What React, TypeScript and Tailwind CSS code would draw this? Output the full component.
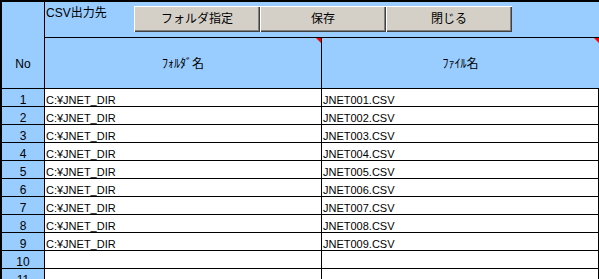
import React from "react";

const FONT = "font-['Liberation_Sans','Noto_Sans_CJK_JP',sans-serif]";

function Btn({ label }: { label: string }) {
  return (
    <div className="w-[126px] h-[26px] bg-[#d4d0c8] shadow-[inset_1px_1px_#ffffff,inset_-1px_-1px_#404040,inset_-2px_-2px_#808080] flex items-center justify-center text-[12px] text-black leading-none">
      {label}
    </div>
  );
}

function Tri() {
  return (
    <div className="absolute top-0 right-0 w-0 h-0 border-t-[5px] border-t-[#ff0000] border-l-[5px] border-l-transparent" />
  );
}

export default function App() {
  const rows = Array.from({ length: 11 }, (_, i) => i + 1);
  return (
    <div className={`w-[599px] h-[279px] overflow-hidden bg-white text-black ${FONT}`}>
      <div className="border-t-2 border-l-2 border-black">
        {/* header block */}
        <div className="flex h-[87px] border-b border-black">
          <div className="w-[43px] bg-[#99ccff] border-r border-black flex flex-col">
            <div className="h-[36px]" />
            <div className="flex-1 flex items-center justify-center text-[12px] pt-[2px]">No</div>
          </div>
          <div className="flex-1 flex flex-col bg-[#99ccff]">
            <div className="h-[36px] border-b border-black flex items-start">
              <div className="w-[89px] pl-[1px] pt-[4px] text-[12px] leading-[14px]">CSV出力先</div>
              <div className="flex mt-[4px]">
                <Btn label="フォルダ指定" />
                <Btn label="保存" />
                <Btn label="閉じる" />
              </div>
            </div>
            <div className="flex-1 flex">
              <div className="relative w-[277px] border-r border-black flex items-center justify-center text-[12px] pt-[2px]">
                ﾌｫﾙﾀﾞ名
                <Tri />
              </div>
              <div className="relative w-[277px] flex items-center justify-center text-[12px] pt-[2px]">
                ﾌｧｲﾙ名
                <Tri />
              </div>
            </div>
          </div>
        </div>
        {/* data rows */}
        {rows.map((n) => (
          <div key={n} className="flex h-[18px] border-b border-black">
            <div className="w-[43px] bg-[#99ccff] border-r border-black text-center text-[12px] leading-[12px] pt-[5px]">
              {n}
            </div>
            <div className="w-[277px] border-r border-black text-[11px] leading-[12px] pt-[5px] pl-[1px] whitespace-nowrap">
              {n <= 9 ? "C:¥JNET_DIR" : ""}
            </div>
            <div className="w-[277px] border-r border-black text-[11px] leading-[12px] pt-[5px] pl-[1px] whitespace-nowrap">
              {n <= 9 ? `JNET00${n}.CSV` : ""}
            </div>
          </div>
        ))}
      </div>
    </div>
  );
}
